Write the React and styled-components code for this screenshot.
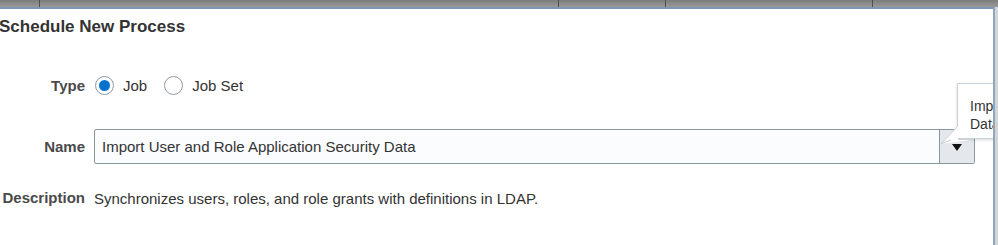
import React from 'react';
import styled, { createGlobalStyle } from 'styled-components';

const GlobalStyle = createGlobalStyle`
  html, body { margin: 0; padding: 0; background: #c9cbcd; }
  body { font-family: "Liberation Sans", Arial, sans-serif; }
`;

const Page = styled.div`
  width: 998px;
  height: 245px;
  display: flex;
  flex-direction: column;
  overflow: hidden;
  background: #d3d5d7;
`;

const TopBar = styled.div`
  height: 7px;
  display: flex;
  background: linear-gradient(#7c7c7c, #9a9a9a);
`;

const TopCell = styled.div`
  width: ${p => p.w}px;
  flex: ${p => (p.w ? 'none' : '1')};
  border-right: ${p => (p.last ? 'none' : '1px solid #505050')};
`;

const Dialog = styled.div`
  position: relative;
  flex: 1;
  margin-right: 3px;
  background: #fff;
  border-top: 2px solid #7d98b6;
  border-right: 2px solid #8fa6bf;
  overflow: hidden;
`;

const Title = styled.h1`
  margin: 0;
  padding: 7px 0 0 0;
  margin-left: -1px;
  font-size: 17px;
  font-weight: bold;
  color: #333;
  line-height: 22px;
`;

const Form = styled.div`
  display: grid;
  grid-template-columns: 85px 1fr;
  column-gap: 9px;
  margin-top: 38px;
  padding-right: 18px;
`;

const Label = styled.div`
  text-align: right;
  font-size: 15px;
  font-weight: bold;
  color: #4a4a4a;
  line-height: ${p => p.h}px;
  margin-bottom: ${p => p.gap}px;
  white-space: nowrap;
`;

const Field = styled.div`
  position: relative;
  display: flex;
  align-items: center;
  height: ${p => p.h}px;
  margin-bottom: ${p => p.gap}px;
  font-size: 15px;
  color: #333;
`;

const RadioOption = styled.label`
  display: flex;
  align-items: center;
  gap: 9px;
  margin-right: 16px;
  margin-left: 1px;
`;

const RadioCircle = styled.span`
  box-sizing: border-box;
  width: 19px;
  height: 19px;
  border-radius: 50%;
  border: 1px solid #8f9aa3;
  background: #fff;
  display: flex;
  align-items: center;
  justify-content: center;
  &::after {
    content: '';
    display: ${p => (p.checked ? 'block' : 'none')};
    width: 11px;
    height: 11px;
    border-radius: 50%;
    background: #0572ce;
  }
`;

const Combo = styled.div`
  box-sizing: border-box;
  flex: 1;
  height: 35px;
  display: flex;
  border: 1px solid #8b979f;
  border-radius: 2px;
  background: #fbfcfe;
`;

const ComboText = styled.div`
  flex: 1;
  padding-left: 7px;
  line-height: 33px;
  color: #333;
`;

const ComboButton = styled.div`
  width: 34px;
  border-left: 1px solid #8b979f;
  background: #e4e8ec;
  display: flex;
  align-items: center;
  justify-content: center;
  &::after {
    content: '';
    border-left: 5px solid transparent;
    border-right: 5px solid transparent;
    border-top: 7px solid #111;
    margin-top: 2px;
  }
`;

const Tooltip = styled.div`
  position: absolute;
  left: 863px;
  top: -46px;
  width: 120px;
  height: 56px;
  box-sizing: border-box;
  padding: 13px 0 0 12px;
  background: #fff;
  border: 1px solid #c9d0d6;
  box-shadow: 0 1px 3px rgba(0, 0, 0, 0.15);
  font-size: 14px;
  line-height: 18px;
  color: #333;
  white-space: nowrap;
`;

const TooltipTail = styled.svg`
  position: absolute;
  left: -17px;
  top: 42px;
  overflow: visible;
`;

const Description = styled.div`
  font-size: 15px;
  color: #333;
`;

export default function App() {
  return (
    <Page>
      <GlobalStyle />
      <TopBar>
        <TopCell w={39} />
        <TopCell w={518} />
        <TopCell w={106} />
        <TopCell w={206} />
        <TopCell last />
      </TopBar>
      <Dialog>
        <Title>Schedule New Process</Title>
        <Form>
          <Label h={19} gap={34}>Type</Label>
          <Field h={19} gap={34}>
            <RadioOption>
              <RadioCircle checked />
              Job
            </RadioOption>
            <RadioOption>
              <RadioCircle />
              Job Set
            </RadioOption>
          </Field>

          <Label h={35} gap={17}>Name</Label>
          <Field h={35} gap={17}>
            <Combo>
              <ComboText>Import User and Role Application Security Data</ComboText>
              <ComboButton />
            </Combo>
            <Tooltip>
              Import User and Role Application Security
              <br />
              Data
              <TooltipTail width="30" height="18" viewBox="0 0 30 18">
                <polygon points="17,0 17,14 30,14 0,18" fill="#fff" />
                <polyline points="17,0 0,18 10,14" fill="none" stroke="#c9d0d6" strokeWidth="1" />
              </TooltipTail>
            </Tooltip>
          </Field>

          <Label h={34} gap={0}>Description</Label>
          <Field h={34} gap={0}>
            <Description>Synchronizes users, roles, and role grants with definitions in LDAP.</Description>
          </Field>
        </Form>
      </Dialog>
    </Page>
  );
}
